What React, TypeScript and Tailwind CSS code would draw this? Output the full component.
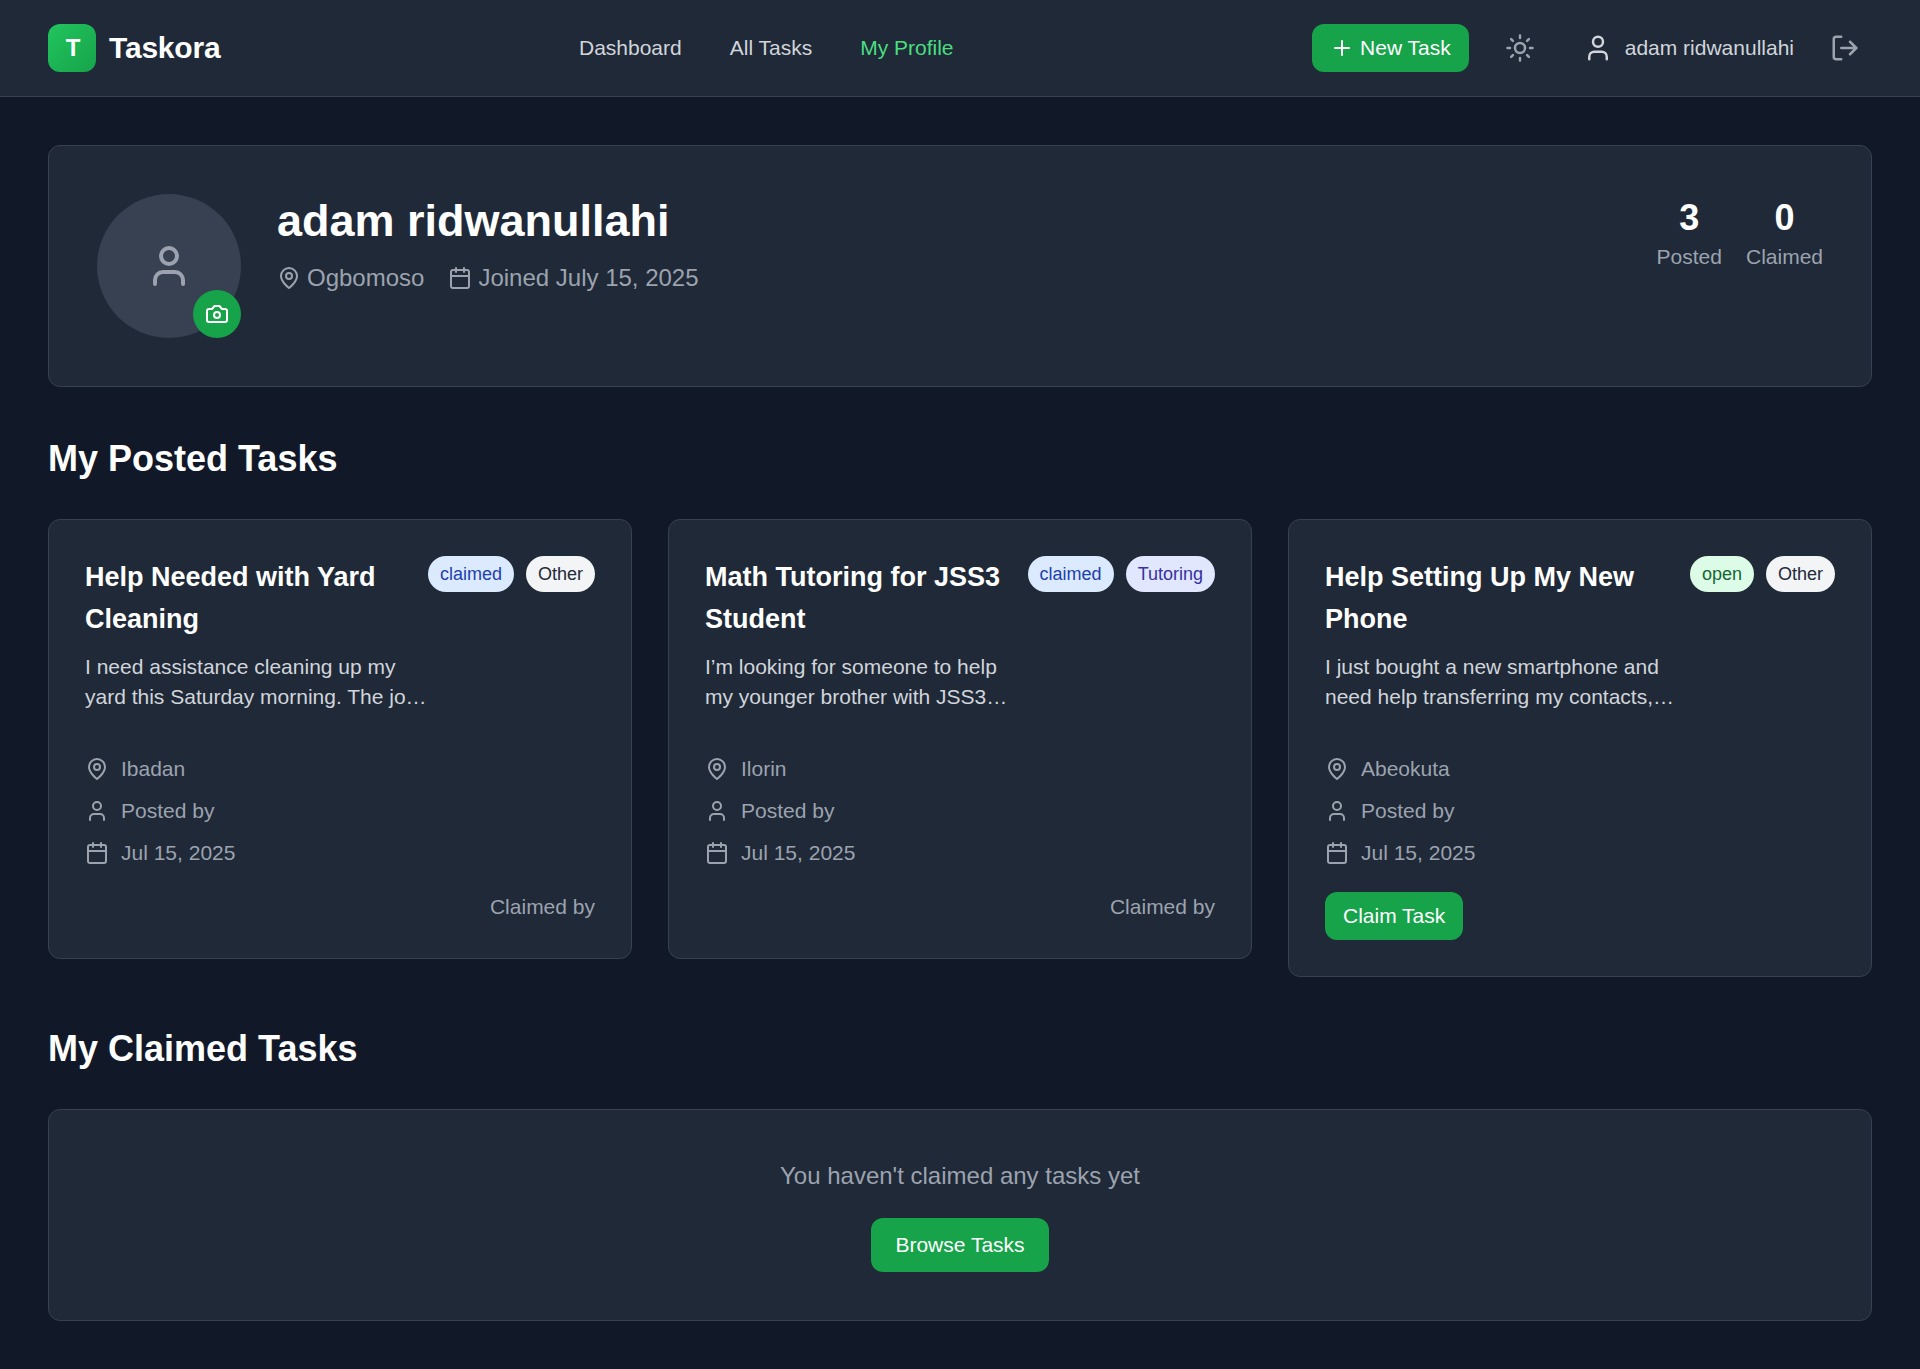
import type { ReactNode } from "react";
import { Calendar, LogOut, Plus, Sun, User } from "lucide-react";

type Badge = { label: string; tone: string };

type Task = {
  title: string;
  summary: string;
  place: string;
  date: string;
  badges: Badge[];
  claimed: boolean;
};

const BLUE = "bg-[#dbeafe] text-[#1e40af]";
const GRAY = "bg-[#f3f4f6] text-[#1f2937]";
const INDIGO = "bg-[#e0e7ff] text-[#3730a3]";
const GREEN = "bg-[#dcfce7] text-[#166534]";

const TASKS: Task[] = [
  {
    title: "Help Needed with Yard\nCleaning",
    summary: "I need assistance cleaning up my\nyard this Saturday morning. The jo…",
    place: "Ibadan",
    date: "Jul 15, 2025",
    badges: [
      { label: "claimed", tone: BLUE },
      { label: "Other", tone: GRAY },
    ],
    claimed: true,
  },
  {
    title: "Math Tutoring for JSS3\nStudent",
    summary: "I’m looking for someone to help\nmy younger brother with JSS3…",
    place: "Ilorin",
    date: "Jul 15, 2025",
    badges: [
      { label: "claimed", tone: BLUE },
      { label: "Tutoring", tone: INDIGO },
    ],
    claimed: true,
  },
  {
    title: "Help Setting Up My New\nPhone",
    summary: "I just bought a new smartphone and\nneed help transferring my contacts,…",
    place: "Abeokuta",
    date: "Jul 15, 2025",
    badges: [
      { label: "open", tone: GREEN },
      { label: "Other", tone: GRAY },
    ],
    claimed: false,
  },
];

function Icon({ children }: { children: ReactNode }) {
  return (
    <svg
      className="size-6 shrink-0"
      viewBox="0 0 24 24"
      fill="none"
      stroke="currentColor"
      strokeWidth="2"
      strokeLinecap="round"
      strokeLinejoin="round"
    >
      {children}
    </svg>
  );
}

function PinIcon() {
  return (
    <Icon>
      <path d="M20 10c0 6-8 12-8 12s-8-6-8-12a8 8 0 0 1 16 0Z" />
      <circle cx="12" cy="10" r="3" />
    </Icon>
  );
}

function CameraIcon() {
  return (
    <Icon>
      <path d="M14.5 4h-5L7 7H4a2 2 0 0 0-2 2v9a2 2 0 0 0 2 2h16a2 2 0 0 0 2-2V9a2 2 0 0 0-2-2h-3l-2.5-3z" />
      <circle cx="12" cy="13" r="3" />
    </Icon>
  );
}

function Header() {
  return (
    <header className="border-b border-[#374151] bg-[#1f2937]">
      <div className="flex h-24 items-center justify-between px-12">
        <div className="flex items-center gap-[13px]">
          <div className="flex size-12 items-center justify-center rounded-xl bg-linear-to-br from-[#22c55e] to-[#16a34a] pl-0.5 text-2xl font-bold text-white">
            T
          </div>
          <span className="text-[30px] leading-[42px] font-bold tracking-[-0.2px] text-white">Taskora</span>
        </div>
        <nav className="flex items-center gap-12 text-[21px] leading-[30px] text-[#d1d5db]">
          <a>Dashboard</a>
          <a>All Tasks</a>
          <a className="text-[#4ade80]">My Profile</a>
        </nav>
        <div className="flex items-center gap-6">
          <button className="flex h-12 items-center gap-1.5 rounded-xl bg-[#16a34a] px-[18px] text-[21px] leading-[30px] text-white">
            <Plus className="size-6" />
            New Task
          </button>
          <button className="p-3 text-[#9ca3af]">
            <Sun className="size-[30px]" />
          </button>
          <div className="flex items-center">
            <div className="flex items-center gap-3 px-3 text-[21px] leading-[30px] text-[#d1d5db]">
              <User className="size-[30px]" />
              <span>adam ridwanullahi</span>
            </div>
            <button className="ml-3 p-3 text-[#9ca3af]">
              <LogOut className="size-[30px]" />
            </button>
          </div>
        </div>
      </div>
    </header>
  );
}

function Stat({ value, label }: { value: number; label: string }) {
  return (
    <div className="text-center">
      <div className="text-4xl leading-[48px] font-bold text-white">{value}</div>
      <div className="text-[21px] leading-[30px] text-[#9ca3af]">{label}</div>
    </div>
  );
}

function ProfileCard() {
  return (
    <section className="flex items-start gap-9 rounded-xl border border-[#374151] bg-[#1f2937] p-12">
      <div className="relative flex size-36 shrink-0 items-center justify-center rounded-full bg-[#374151] text-[#9ca3af]">
        <User className="size-12" />
        <button className="absolute right-0 bottom-0 flex size-12 items-center justify-center rounded-full bg-[#16a34a] text-white">
          <CameraIcon />
        </button>
      </div>
      <div className="flex-1">
        <h1 className="text-[45px] leading-[54px] font-bold text-white">adam ridwanullahi</h1>
        <div className="mt-3 flex items-center gap-6 text-2xl leading-9 text-[#9ca3af]">
          <span className="flex items-center gap-1.5">
            <PinIcon />
            Ogbomoso
          </span>
          <span className="flex items-center gap-1.5">
            <Calendar className="size-6" />
            Joined July 15, 2025
          </span>
        </div>
      </div>
      <div className="flex gap-6">
        <Stat value={3} label="Posted" />
        <Stat value={0} label="Claimed" />
      </div>
    </section>
  );
}

function TaskCard({ task }: { task: Task }) {
  return (
    <article className="rounded-xl border border-[#374151] bg-[#1f2937] p-9 text-[21px] leading-[30px] text-[#9ca3af]">
      <div className="flex items-start justify-between">
        <div className="w-0 flex-1 whitespace-pre">
          <h3 className="text-[27px] leading-[42px] font-bold text-white">{task.title}</h3>
          <p className="mt-3 text-[#d1d5db]">{task.summary}</p>
        </div>
        <div className="flex gap-3">
          {task.badges.map((b) => (
            <span key={b.label} className={`rounded-full px-3 py-1.5 text-lg leading-6 ${b.tone}`}>
              {b.label}
            </span>
          ))}
        </div>
      </div>
      <div className="mt-[42px] flex flex-col gap-3">
        <div className="flex items-center gap-3">
          <PinIcon />
          {task.place}
        </div>
        <div className="flex items-center gap-3">
          <User className="size-6" />
          Posted by
        </div>
        <div className="flex items-center gap-3">
          <Calendar className="size-6" />
          {task.date}
        </div>
      </div>
      <div className="mt-6">
        {task.claimed ? (
          <div className="text-right">Claimed by</div>
        ) : (
          <button className="block rounded-xl bg-[#16a34a] px-[18px] py-[9px] text-white">Claim Task</button>
        )}
      </div>
    </article>
  );
}

export default function App() {
  return (
    <div className="min-h-screen bg-[#111827] font-['Liberation_Sans',Arial,sans-serif]">
      <Header />
      <main className="p-12">
        <ProfileCard />
        <h2 className="mt-12 mb-9 text-4xl leading-[48px] font-bold text-white">My Posted Tasks</h2>
        <section className="grid grid-cols-3 items-start gap-9">
          {TASKS.map((t) => (
            <TaskCard key={t.title} task={t} />
          ))}
        </section>
        <h2 className="mt-12 mb-9 text-4xl leading-[48px] font-bold text-white">My Claimed Tasks</h2>
        <section className="flex flex-col items-center rounded-xl border border-[#374151] bg-[#1f2937] p-12">
          <p className="text-2xl leading-9 text-[#9ca3af]">You haven't claimed any tasks yet</p>
          <button className="mt-6 rounded-xl bg-[#16a34a] px-6 py-3 text-[21px] leading-[30px] text-white">
            Browse Tasks
          </button>
        </section>
      </main>
    </div>
  );
}
